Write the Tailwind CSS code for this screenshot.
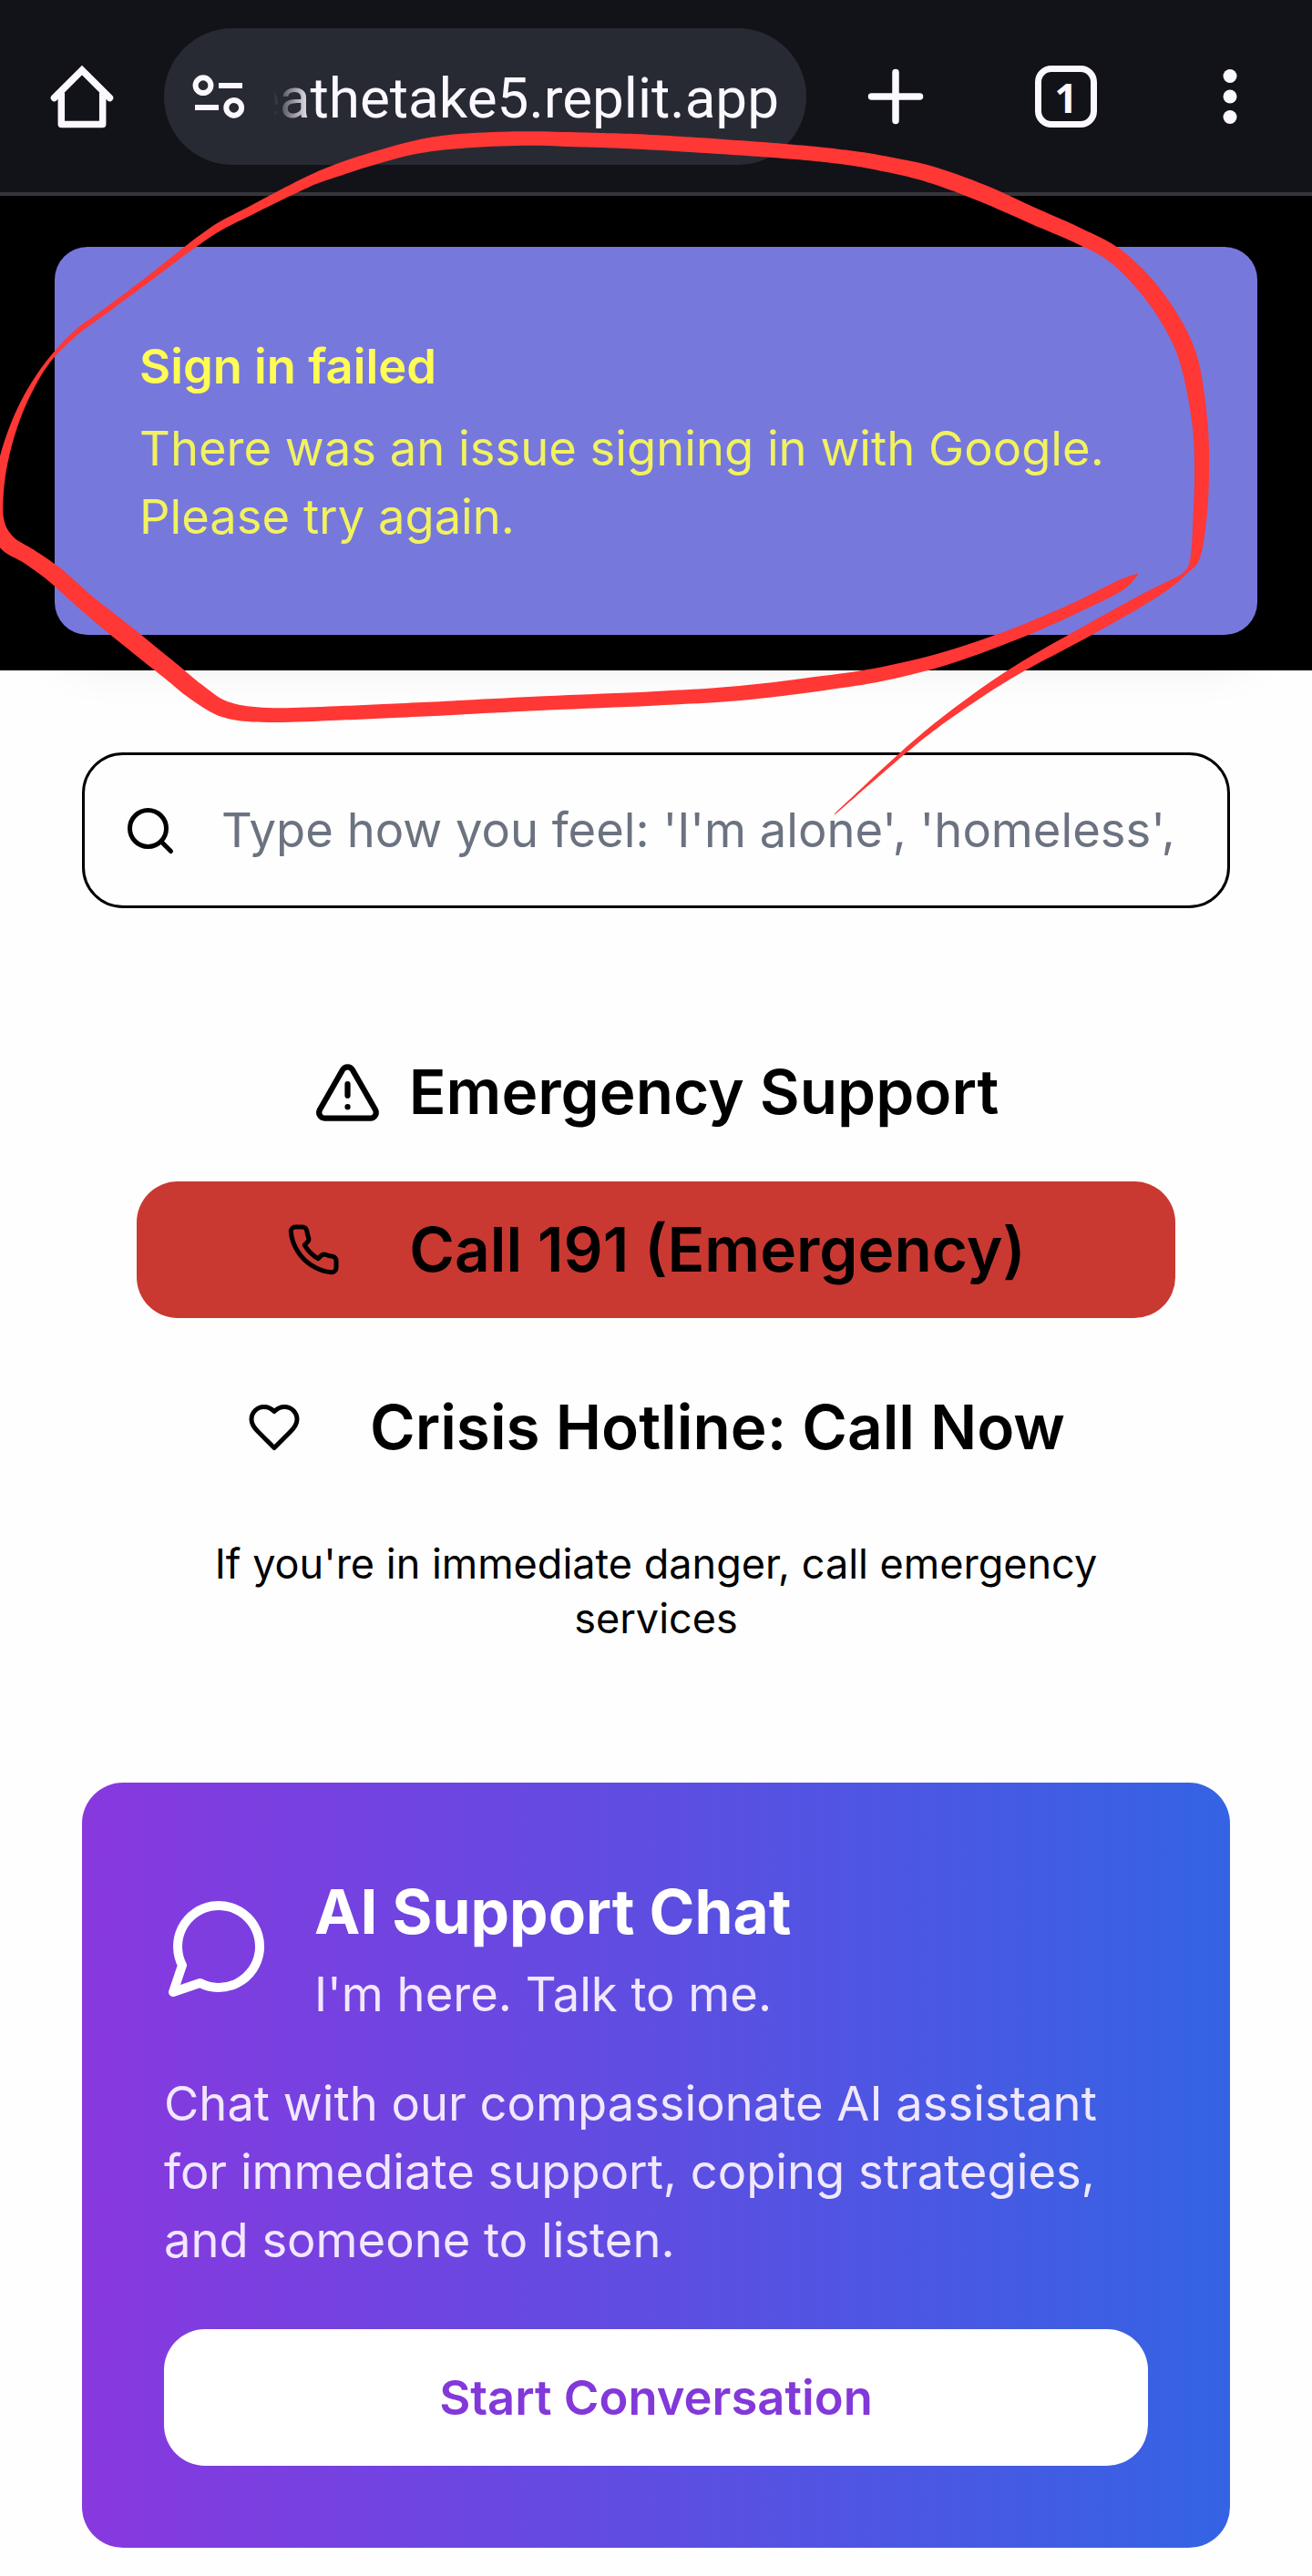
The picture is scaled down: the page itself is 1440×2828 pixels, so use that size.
<!DOCTYPE html>
<html lang="en">
<head>
<meta charset="utf-8">
<meta name="viewport" content="width=device-width, initial-scale=1">
<title>Support</title>
<script src="https://cdn.jsdelivr.net/npm/@tailwindcss/browser@4"></script>
</head>
<body class="relative h-[2828px] w-[1440px] overflow-hidden bg-[#fefefe] font-['Inter',sans-serif] text-black">

<!-- Browser toolbar -->
<header class="relative z-10 flex h-[215px] items-start border-b-4 border-[#35353b] bg-[#121318] pt-[31px] text-[#fbf8ff]">
  <div class="flex h-[150px] w-[180px] items-center justify-center">
    <svg class="h-[72px] w-[72px]" viewBox="0 0 72 72" fill="none" stroke="currentColor" stroke-width="7.5" stroke-linejoin="round">
      <path d="M5.5 37.5 36 7l30.500 30.500" stroke-linejoin="miter" stroke-linecap="round"/>
      <path d="M13.300 32v34.300q0 .2.2.2h45q.2 0 .2-.2V32"/>
    </svg>
  </div>
  <div class="flex h-[150px] w-[705px] items-center rounded-full bg-[#282a33] pl-[30px] pr-[30px]">
    <svg class="h-[60px] w-[60px] shrink-0" viewBox="0 0 60 60" fill="none" stroke="currentColor" stroke-width="6">
      <circle cx="13" cy="17.700" r="8.400"/><path d="M30 18h26M4 42h26"/><circle cx="46.700" cy="42.300" r="8.400"/>
    </svg>
    <div class="ml-[30px] mt-[4px] flex h-[90px] flex-1 items-center justify-end overflow-hidden whitespace-nowrap font-['Roboto',sans-serif] text-[62px] leading-[90px] [mask-image:linear-gradient(to_right,transparent,black_42px)]">eathetake5.replit.app</div>
  </div>
  <div class="flex h-[150px] flex-1 items-center pl-[65px]">
    <svg class="h-[66px] w-[66px]" viewBox="0 0 66 66" fill="none" stroke="currentColor" stroke-width="7.5" stroke-linecap="round"><path d="M33 6.500v53M6.500 33h53"/></svg>
    <div class="ml-[120px] flex h-[68px] w-[68px] items-center justify-center rounded-[18px] border-[7.5px] border-current pt-[2px] font-['Open_Sans',sans-serif] text-[44px] font-bold leading-none">1</div>
    <svg class="ml-[137px] h-[66px] w-[18px]" viewBox="0 0 18 66" fill="currentColor"><circle cx="9" cy="10.500" r="7.500"/><circle cx="9" cy="33" r="7.500"/><circle cx="9" cy="55.500" r="7.500"/></svg>
  </div>
</header>

<!-- Toast -->
<section class="h-[521px] bg-black px-[60px] pt-14">
  <div class="h-[426px] rounded-[36px] bg-[#7778dc] pl-[93px] pt-[94px] shadow-[0_37px_56px_-11px_rgba(0,0,0,0.1)]">
    <h2 class="text-[52.5px] font-semibold leading-[75px] text-[#fffc55]">Sign in failed</h2>
    <p class="mt-[15px] text-[52.5px] leading-[75px] text-[#f1f25e]">There was an issue signing in with Google.<br>Please try again.</p>
  </div>
</section>

<main class="px-[90px] pt-[90px]">
  <label class="flex h-[171px] items-center rounded-[45px] border-[3px] border-black pl-[42px]">
    <svg class="h-[60px] w-[60px] shrink-0" viewBox="0 0 24 24" fill="none" stroke="currentColor" stroke-width="2" stroke-linecap="round" stroke-linejoin="round"><circle cx="11" cy="11" r="8"/><path d="m21 21-4.300-4.300"/></svg>
    <span class="ml-[48px] whitespace-nowrap text-[52.5px] leading-[75px] text-[#6b7280]">Type how you feel: 'I'm alone', 'homeless',</span>
  </label>

  <section class="mt-[150px] px-[60px]">
    <h2 class="flex h-[105px] items-center justify-center gap-[30px] text-[67.5px] font-semibold leading-[105px]">
      <svg class="h-[75px] w-[75px]" viewBox="0 0 24 24" fill="none" stroke="currentColor" stroke-width="2" stroke-linecap="round" stroke-linejoin="round"><path d="m21.730 18-8-14a2 2 0 0 0-3.480 0l-8 14A2 2 0 0 0 4 21h16a2 2 0 0 0 1.730-3"/><path d="M12 9v4M12 17h.01"/></svg>
      <span class="-mt-[2px]">Emergency Support</span>
    </h2>
    <button class="mt-[45px] flex h-[150px] w-full items-center justify-center gap-[75px] rounded-[45px] bg-[#c93931] text-[67.5px] font-semibold leading-[105px]">
      <svg class="h-[60px] w-[60px]" viewBox="0 0 24 24" fill="none" stroke="currentColor" stroke-width="2" stroke-linecap="round" stroke-linejoin="round"><path d="M22 16.920v3a2 2 0 0 1-2.180 2 19.790 19.790 0 0 1-8.630-3.070 19.500 19.500 0 0 1-6-6 19.790 19.790 0 0 1-3.070-8.670A2 2 0 0 1 4.110 2h3a2 2 0 0 1 2 1.720 12.840 12.840 0 0 0 .7 2.810 2 2 0 0 1-.45 2.110L8.090 9.910a16 16 0 0 0 6 6l1.270-1.270a2 2 0 0 1 2.110-.45 12.840 12.840 0 0 0 2.810.7A2 2 0 0 1 22 16.920z"/></svg>
      <span class="-mt-[2px]">Call 191 (Emergency)</span>
    </button>
    <button class="mt-[45px] flex h-[150px] w-full items-center justify-center gap-[75px] text-[67.5px] font-semibold leading-[105px]">
      <svg class="h-[60px] w-[60px]" viewBox="0 0 24 24" fill="none" stroke="currentColor" stroke-width="2" stroke-linecap="round" stroke-linejoin="round"><path d="M19 14c1.490-1.460 3-3.210 3-5.500A5.500 5.500 0 0 0 16.500 3c-1.760 0-3 .5-4.500 2-1.500-1.500-2.740-2-4.500-2A5.500 5.500 0 0 0 2 8.500c0 2.300 1.500 4.050 3 5.500l7 7Z"/></svg>
      <span class="-mt-[2px]">Crisis Hotline: Call Now</span>
    </button>
    <p class="mt-[45px] text-center text-[45px] leading-[60px]">If you're in immediate danger, call emergency<br>services</p>
  </section>

  <section class="mt-[150px] h-[840px] rounded-[45px] bg-[linear-gradient(to_right,#8838df,#3463e4)] p-[90px] text-white">
    <div class="flex h-[180px] items-center gap-[45px]">
      <svg class="h-[120px] w-[120px]" viewBox="0 0 24 24" fill="none" stroke="currentColor" stroke-width="2" stroke-linecap="round" stroke-linejoin="round"><path d="M7.900 20A9 9 0 1 0 4 16.100L2 22Z"/></svg>
      <div>
        <h3 class="-mt-px mb-px text-[67.5px] font-bold leading-[105px]">AI Support Chat</h3>
        <p class="text-[52.5px] leading-[75px] text-[#f1e7ff]">I'm here. Talk to me.</p>
      </div>
    </div>
    <p class="mt-[45px] whitespace-nowrap text-[52.5px] leading-[75px] text-[#f1e7ff]">Chat with our compassionate AI assistant<br>for immediate support, coping strategies,<br>and someone to listen.</p>
    <button class="mt-[60px] flex h-[150px] w-full items-center justify-center rounded-[45px] bg-white text-[52.5px] font-semibold leading-[75px] text-[#8338d9]">Start Conversation</button>
  </section>
</main>

<!-- Freehand marker stroke over the page -->
<svg class="pointer-events-none absolute left-0 top-0 z-20 h-[2828px] w-[1440px]" viewBox="0 0 1440 2828"><path id="marker" fill="#ff3735"/></svg>
<script>
// Pen samples: x, y, stroke width
const pen = [
  [916,894,1],[1001,818,5],[1058,774,7.5],[1117,735,10],[1189,695,12.5],[1248,662,12],[1281,643,8],[1301,629,3.5],[1312,611,10.5],[1317,567,15],
  [1319,520,16],[1317,465,17],[1306,400,20],[1288,357,20],[1259,315,19.5],[1223,280,18],[1182,258,17.5],[1136.400,238,18],[1078,212,19],
  [1023,192,18.5],[977,181,17],[926.600,172.500,16],[857.700,165.700,16],[720,156.500,16.5],[640,153.500,16],[574,152,15.5],[505,155,16],[459,161,15],
  [413,173,14],[367,188,13.5],[335,201,11.5],[275.500,231,9.5],[229.600,256,8.5],[160.700,308,6],[115,342,5.5],[82.600,366,5.5],
  [53,397,4],[31.500,431,6],[15.400,467,8],[4,505,10],[-2,540,12],[-3,572,15],[8,596,19],[32,611,18],[60,631,19],[95,662,19.5],[135.600,695,21],[186.500,736,20.5],
  [216,760,20],[248,779,18],[294,785,16],[370,783,15.5],[459,779,15.5],[597,772,15.5],[716,767,15.5],[812,761,16],[903.700,750,16],[968,740,15.5],
  [1037,723,14.5],[1114,696,13],[1179,668,12],[1228,643.500,12],[1249,630,1]
];
const at = i => pen[Math.max(0, Math.min(pen.length - 1, i))];
const left = [], right = [];
pen.forEach(([x, y, w], i) => {
  const [ax, ay] = at(i - 1), [bx, by] = at(i + 1);
  const d = Math.hypot(bx - ax, by - ay), nx = -(by - ay) / d * w / 2, ny = (bx - ax) / d * w / 2;
  left.push([x + nx, y + ny]);
  right.unshift([x - nx, y - ny]);
});
const curve = p => p.slice(1).map((q, i) => {
  const a = p[Math.max(0, i - 1)], b = p[i], c = p[Math.min(p.length - 1, i + 2)];
  return `C${b[0] + (q[0] - a[0]) / 6} ${b[1] + (q[1] - a[1]) / 6} ${q[0] - (c[0] - b[0]) / 6} ${q[1] - (c[1] - b[1]) / 6} ${q[0]} ${q[1]}`;
}).join('');
document.getElementById('marker').setAttribute('d', `M${left[0]}${curve(left)}L${right[0]}${curve(right)}Z`);
</script>
</body>
</html>
